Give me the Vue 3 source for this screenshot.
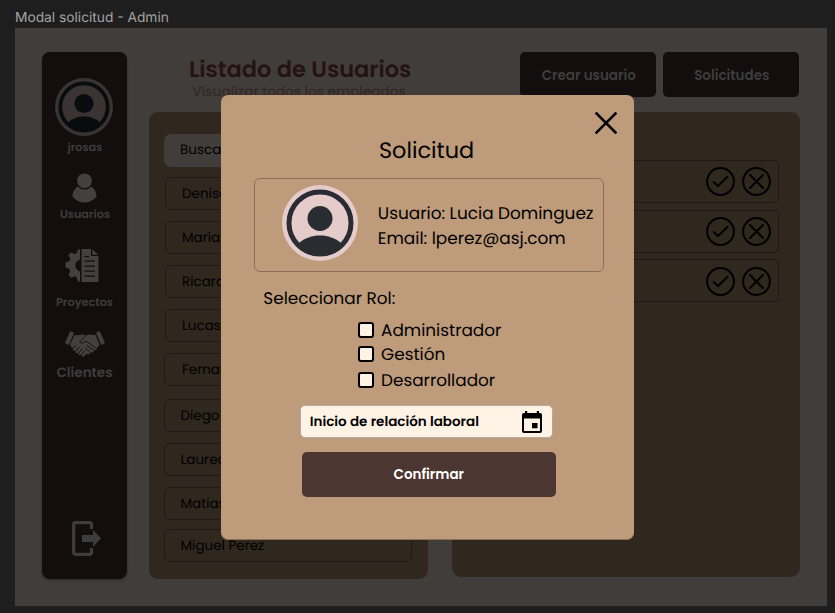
<script setup>
const users = ['Denise', 'María', 'Ricardo', 'Lucas', 'Fernando', 'Diego', 'Laureano', 'Matias', 'Miguel Perez']
const requests = [1, 2, 3]
const roles = ['Administrador', 'Gestión', 'Desarrollador']
</script>

<template>
  <div class="canvas">
    <div class="frame-label">Modal solicitud - Admin</div>
    <div class="frame">
      <aside class="sidebar">
        <svg class="avatar" viewBox="0 0 76 76">
          <circle cx="38" cy="38" r="38" fill="#3b3333" />
          <circle cx="38" cy="38" r="31" fill="none" stroke="#090c0e" stroke-width="5" />
          <circle cx="38" cy="33.5" r="12.5" fill="#090c0e" />
          <path d="M17 58C28 48 48 48 59 58A29.500 29.500 0 0 1 38 68A29.500 29.500 0 0 1 17 58Z" fill="#090c0e" />
        </svg>
        <span class="name">jrosas</span>
        <svg class="i-user" viewBox="0 0 26 31">
          <circle cx="13" cy="8" r="7.7" />
          <path d="M6 14C2.500 16.500 .5 20 .5 24.500C4 28.500 8.300 30.500 13 30.500S22 28.500 25.500 24.500C25.500 20 23.500 16.500 20 14A9.300 9.300 0 0 1 6 14Z" />
        </svg>
        <span class="name users">Usuarios</span>
        <svg class="i-project" viewBox="0 0 34 33">
          <path d="M15 .5H13L11.500 4.300L9.500 5L6 3.500L3.500 6L5.200 9.700L4.300 12L.500 13.500V18.500L4.300 20L5.200 22.500L3.500 26L6 28.800L9.500 27.200L11.500 28L13 32.500H15V22.500C8.800 20.500 8.800 12.500 15 10.500Z" />
          <path fill-rule="evenodd" d="M16.500 0H26V7H33.500V33H16.500ZM19.500 7V8.300H24V7ZM19.500 11.500V12.800H30V11.500ZM19.500 16.500V17.800H30V16.500ZM19.500 21.500V22.800H30V21.500ZM19.500 26.500V27.800H30V26.500Z" />
          <path d="M27.300 .3L33.300 5.800H27.300Z" />
        </svg>
        <span class="name projects">Proyectos</span>
        <svg class="i-clients" viewBox="0 0 40 26">
          <path d="M5.500 .7L8.500 2L3.500 13.500L.5 11.800ZM34.500 .7L31.500 2L36.500 13.500L39.500 11.800Z" stroke="#43403d" stroke-linejoin="round" />
          <path d="M9.500 4C13 5 15 3 18 3.500L21 4.500C24 2.500 27 4.500 30.500 4L34.500 13.500C33.500 15.500 32.500 16 32 17C32 19 30.500 19.500 29 19C29 21.500 27 22 25.500 21.200C25 23.500 23 24 21.500 22.500L19 25.500C17.500 26 16 25 16.300 23.500C15 25 13 24 13.300 22C11.500 23 9.700 21.500 10.500 20C8.500 20.500 7 18.500 8 17C6.500 16.500 6 15 5 13.500Z" />
          <path d="M21 4.500L15 10.500C15 13 18 12.500 21 10L31.500 17.500M22 14.500L28.500 19.200M20 17L25 21.300M7.800 17.300L11 14.500M10.500 20.200L14 16.500M13.300 22.500L16.500 18.500M16.500 24L19 20.500" fill="none" stroke="#130d0d" stroke-width=".9" stroke-linecap="round" />
        </svg>
        <span class="name clients">Clientes</span>
        <svg class="i-exit" viewBox="0 0 29 35">
          <path d="M19.500 8V3.500Q19.500 1.700 17.500 1.700H3.500Q1.700 1.700 1.700 3.500V31.500Q1.700 33.300 3.500 33.300H17.500Q19.500 33.300 19.500 31.500V27" fill="none" stroke="#3d3d3d" stroke-width="3.200" />
          <path d="M10 14H21V9L29 17.300L21 26V21H10Z" fill="#3d3d3d" />
        </svg>
      </aside>

      <main class="content">
        <header class="top">
          <div class="heading">
            <h1>Listado de Usuarios</h1>
            <p>Visualizar todos los empleados</p>
          </div>
          <div class="actions">
            <button>Crear usuario</button>
            <button>Solicitudes</button>
          </div>
        </header>
        <div class="panels">
          <section class="panel users-panel">
            <div class="search">Buscar</div>
            <div v-for="u in users" :key="u" class="user">{{ u }}</div>
          </section>
          <section class="panel requests-panel">
            <div v-for="r in requests" :key="r" class="request">
              <svg viewBox="0 0 29 29"><circle cx="14.500" cy="14.500" r="13.400" /><path d="M7.700 15L12 19L21.500 9.800" /></svg>
              <svg viewBox="0 0 29 29"><circle cx="14.500" cy="14.500" r="13.400" /><path d="M8 8L21 21M21 8L8 21" /></svg>
            </div>
          </section>
        </div>
      </main>
    </div>

    <div class="modal">
      <svg class="close" viewBox="0 0 22 22"><path d="M1.500 1.500L20.500 20.500M20.500 1.500L1.500 20.500" /></svg>
      <h2>Solicitud</h2>
      <div class="card">
        <svg class="photo" viewBox="0 0 76 76">
          <circle cx="38" cy="38" r="38" fill="#e6cbcb" />
          <circle cx="38" cy="38" r="31" fill="none" stroke="#292d32" stroke-width="5" />
          <circle cx="38" cy="33.500" r="12.500" fill="#292d32" />
          <path d="M17 58C28 48 48 48 59 58A29.500 29.500 0 0 1 38 68A29.500 29.500 0 0 1 17 58Z" fill="#292d32" />
        </svg>
        <div class="info">
          <span>Usuario: Lucia Dominguez</span>
          <span>Email: lperez@asj.com</span>
        </div>
      </div>
      <div class="role-title">Seleccionar Rol:</div>
      <div class="roles">
        <label v-for="r in roles" :key="r"><i class="box"></i>{{ r }}</label>
      </div>
      <div class="date">
        <span>Inicio de relación laboral</span>
        <svg viewBox="0 0 20 22">
          <path fill-rule="evenodd" d="M3 0H5.200V2H14.800V0H17V2H18Q20 2 20 4V20Q20 22 18 22H2Q0 22 0 20V4Q0 2 2 2H3ZM2 7.500V20H18V7.500ZM10 12H15.500V17.300H10Z" />
        </svg>
      </div>
      <button class="confirm">Confirmar</button>
    </div>
  </div>
</template>

<style>
body { margin: 0; background: #1e1e1e; }
</style>

<style scoped>
* { box-sizing: border-box; }
.canvas {
  position: relative;
  width: 835px;
  height: 613px;
  overflow: hidden;
  padding-left: 15px;
  background: #1e1e1e;
  font-family: Poppins, Inter, sans-serif;
  text-rendering: geometricPrecision;
  color: #000;
}
.frame-label {
  height: 28px;
  padding-top: 8px;
  font: 400 13.750px/20px Inter, sans-serif;
  color: #a4a4a4;
  white-space: nowrap;
}
.frame {
  display: flex;
  width: 812px;
  height: 577.500px;
  padding: 23.700px 26px 0 27px;
  background: #413d3a;
}
button { border: 0; padding: 0; font-family: inherit; }
svg { display: block; flex: none; }

.sidebar {
  display: flex;
  flex-direction: column;
  align-items: center;
  width: 85px;
  height: 527.800px;
  padding: 26px 0 0;
  border-radius: 8px;
  background: #130d0d;
  box-shadow: 0 1px 3px rgba(0, 0, 0, .35);
}
.avatar { width: 58px; height: 58px; margin-right: 1px; }
.name { height: 16px; font-size: 11.300px; line-height: 16px; font-weight: 600; color: #3d3d3d; }
.sidebar .name:nth-child(2) { margin: 3px 0 0 1px; }
.i-user { width: 25px; height: 30px; margin-top: 18px; fill: #43403d; }
.sidebar .users { margin: 3px 0 0 1px; }
.i-project { width: 34px; height: 33px; margin-top: 27px; margin-right: 5px; fill: #43403d; }
.projects { margin-top: 12px; }
.i-clients { width: 40px; height: 26px; margin-top: 21px; fill: #43403d; }
.clients { margin-top: 8px; font-size: 13.500px; }
.i-exit { width: 29px; height: 35px; margin: auto 0 23.500px 3px; }

.content { width: 651px; margin-left: 22px; }
.top { display: flex; height: 60.300px; }
.heading { width: 222px; margin-left: 40px; text-align: center; white-space: nowrap; }
h1 { margin: 3px 0 0; font-size: 22.500px; line-height: 29px; font-weight: 600; color: #251212; }
p { margin: 0 0 0 -2px; font-size: 13.600px; line-height: 16px; font-weight: 500; color: #342828; }
.actions { display: flex; gap: 7.500px; margin-left: 109px; }
.actions button {
  width: 135.500px;
  height: 45px;
  padding: 3.500px 0 0 2px;
  border-radius: 5px;
  background: #130d0d;
  color: #3d3d3d;
  font-size: 13.500px;
  font-weight: 600;
}
.panels { display: flex; gap: 24px; }
.panel { border-radius: 9px; background: #30271f; }
.users-panel { width: 279.500px; height: 467.500px; padding: 22px 16.500px 0 15px; }
.search {
  height: 33px;
  padding-left: 16px;
  margin-bottom: 10.500px;
  border-radius: 7px;
  background: #413d3a;
  font-size: 13.500px;
  line-height: 32px;
}
.user {
  height: 33px;
  margin: 0 0 11px 1px;
  padding-left: 16px;
  border: 1px solid #211917;
  border-radius: 6px;
  font-size: 13.500px;
  line-height: 31px;
}
.user:nth-child(n+6) { margin-left: 0; padding-left: 17px; }
.user:nth-child(n+7) { padding-left: 15.500px; }
.user:nth-child(6) { margin-bottom: 12.500px; }
.user:nth-child(9) { margin-bottom: 9px; }
.requests-panel { width: 348px; height: 465px; padding: 48px 21px 0 20px; }
.request {
  display: flex;
  justify-content: flex-end;
  align-items: center;
  gap: 7.500px;
  height: 43px;
  margin-bottom: 6.700px;
  padding-right: 7px;
  border: 1px solid #211917;
  border-radius: 5px;
}
.request svg { width: 29px; height: 29px; fill: none; stroke: #000; stroke-width: 2; stroke-linecap: round; }
.request:nth-child(3) { padding-top: 1px; }

.modal {
  position: absolute;
  left: 221.300px;
  top: 94.500px;
  width: 412.500px;
  height: 445.500px;
  padding: 17.500px 30px 0 33px;
  border-bottom: 1px solid #8c6f55;
  border-radius: 7px;
  background: #be9b7a;
}
.close { width: 22px; height: 22px; margin: 0 -13.500px 0 auto; fill: none; stroke: #000; stroke-width: 2.600; stroke-linecap: square; }
h2 { margin: -1px 0 0 -5px; font-size: 22.400px; line-height: 34px; font-weight: 400; text-align: center; }
.card {
  display: flex;
  align-items: center;
  height: 94px;
  margin-top: 11px;
  padding-left: 26.500px;
  padding-bottom: 4px;
  border: 1px solid #89705c;
  border-radius: 6px;
}
.photo { width: 76px; height: 76px; }
.info { display: flex; flex-direction: column; margin-left: 20px; padding-top: 6px; font-size: 16.900px; line-height: 25.300px; white-space: nowrap; }
.role-title { margin: 14px 0 0 9px; font-size: 16.850px; line-height: 25px; }
.roles { display: flex; flex-direction: column; gap: 9px; margin: 11px 0 0 103.300px; }
.roles label { display: flex; align-items: center; gap: 7.500px; height: 16px; font-size: 16.850px; line-height: 16px; }
.roles label:nth-child(2) { margin-top: -.800px; margin-bottom: 1px; }
.box { width: 16px; height: 16px; border: 2px solid #000; border-radius: 3px; background: #fff3e6; }
.date {
  display: flex;
  align-items: center;
  justify-content: space-between;
  width: 253px;
  height: 33px;
  margin: 17px 0 0 46px;
  padding: 0 10px 0 8.500px;
  border: 1px solid #b5aa9e;
  border-radius: 5px;
  background: #fff3e6;
  font-size: 13.500px;
  font-weight: 600;
}
.date svg { width: 20px; height: 22px; }
.confirm {
  display: block;
  width: 254px;
  height: 45px;
  margin: 14px 0 0 47.500px;
  padding-top: 1px;
  border-radius: 5px;
  background: #4b3631;
  color: #fff;
  font-size: 13.500px;
  font-weight: 600;
}
</style>
